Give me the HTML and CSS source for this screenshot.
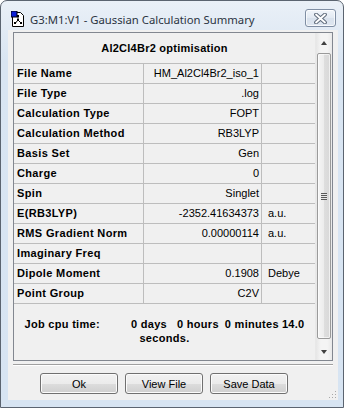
FILE: index.html
```html
<!DOCTYPE html>
<html lang="en">
<head>
    <meta charset="UTF-8">
    <title>G3:M1:V1 - Gaussian Calculation Summary</title>
    <link rel="stylesheet" href="styles.css">
</head>
<body>

<div class="window">
    <div class="titlebar">
        <svg class="app-icon" width="14" height="16" viewBox="0 0 14 16">
            <path d="M1.5 1.5 H9.5 L12.5 4.5 V15.5 H1.5 Z" fill="#fff" stroke="#000"/>
            <rect x="0" y="0" width="6" height="6" fill="#0b1fd6" stroke="#000" stroke-width="1"/>
            <path d="M7 5 V9 M7 9 L4.5 12 M7 9 L10 12" stroke="#000" stroke-width="1" fill="none"/>
            <rect x="6" y="4" width="2" height="2" fill="#000"/>
            <rect x="6" y="8" width="2" height="2" fill="#000"/>
            <rect x="3" y="11" width="2" height="2" fill="#000"/>
            <rect x="9" y="11" width="2" height="2" fill="#000"/>
        </svg>
        <span class="title">G3:M1:V1 - Gaussian Calculation Summary</span>
        <div class="close-btn">
            <svg width="15" height="11" viewBox="0 0 15 11">
                <path d="M3 1.5 L12 9.5 M12 1.5 L3 9.5" stroke="#5f6b7b" stroke-width="3.8" stroke-linecap="round"/>
                <path d="M3 1.5 L12 9.5 M12 1.5 L3 9.5" stroke="#fff" stroke-width="1.8" stroke-linecap="round"/>
            </svg>
        </div>
    </div>

    <div class="client">
        <div class="panel">
            <div class="summary">
                <div class="summary-title">Al2Cl4Br2 optimisation</div>
                <div class="summary-grid">
                    <div class="cell label">File Name</div><div class="cell value">HM_Al2Cl4Br2_iso_1</div><div class="cell unit"></div>
                    <div class="cell label">File Type</div><div class="cell value">.log</div><div class="cell unit"></div>
                    <div class="cell label">Calculation Type</div><div class="cell value">FOPT</div><div class="cell unit"></div>
                    <div class="cell label">Calculation Method</div><div class="cell value">RB3LYP</div><div class="cell unit"></div>
                    <div class="cell label">Basis Set</div><div class="cell value">Gen</div><div class="cell unit"></div>
                    <div class="cell label">Charge</div><div class="cell value">0</div><div class="cell unit"></div>
                    <div class="cell label">Spin</div><div class="cell value">Singlet</div><div class="cell unit"></div>
                    <div class="cell label">E(RB3LYP)</div><div class="cell value">-2352.41634373</div><div class="cell unit">a.u.</div>
                    <div class="cell label">RMS Gradient Norm</div><div class="cell value">0.00000114</div><div class="cell unit">a.u.</div>
                    <div class="cell label">Imaginary Freq</div><div class="cell value"></div><div class="cell unit"></div>
                    <div class="cell label">Dipole Moment</div><div class="cell value">0.1908</div><div class="cell unit">Debye</div>
                    <div class="cell label">Point Group</div><div class="cell value">C2V</div><div class="cell unit"></div>
                </div>
                <div class="cpu-time">
                    <div class="cpu-line"><span>Job cpu time:</span><span class="gap-lg">0 days</span><span class="gap-md">0 hours</span><span class="gap-sm">0 minutes</span><span class="gap-xs">14.0</span></div>
                    <div class="cpu-line">seconds.</div>
                </div>
            </div>
            <div class="scrollbar">
                <div class="scroll-btn"><span class="arrow-up"></span></div>
                <div class="scroll-thumb"><span class="thumb-grip"></span></div>
                <div class="scroll-btn"><span class="arrow-down"></span></div>
            </div>
        </div>

        <div class="separator"></div>

        <div class="button-row">
            <button type="button" class="btn">Ok</button>
            <button type="button" class="btn">View File</button>
            <button type="button" class="btn">Save Data</button>
        </div>

        <div class="size-grip"></div>
    </div>
</div>

</body>
</html>
```

FILE: styles.css
```css
body {
    margin: 0;
    background: #fff;
    font-family: "Liberation Sans", Arial, sans-serif;
    font-size: 11px;
    color: #000;
}

.window {
    width: 344px;
    height: 408px;
    box-sizing: border-box;
    border: 1px solid #5b6470;
    border-radius: 7px 7px 0 0;
    background: linear-gradient(#eaf0f7, #d9e5f2 60px, #d7e4f2);
    display: flex;
    flex-direction: column;
}

.titlebar {
    height: 29px;
    display: flex;
    align-items: center;
    padding: 0 7px 0 10px;
}

.app-icon {
    flex: none;
    margin-top: 6px;
}

.title {
    margin-left: 5px;
    margin-top: 7px;
    font-family: "Noto Sans", "Open Sans", sans-serif;
    font-size: 11.3px;
    color: #2b3442;
    flex: 1;
    white-space: nowrap;
}

.close-btn {
    align-self: flex-start;
    margin-top: 8px;
    width: 31px;
    height: 18px;
    box-sizing: border-box;
    border: 1px solid #7f8ea3;
    border-radius: 3px;
    background: linear-gradient(#f1f5fa, #e2e9f2 50%, #d8e1ec 51%, #dfe7f1);
    box-shadow: inset 0 0 0 1px rgba(255, 255, 255, 0.7);
    display: flex;
    align-items: center;
    justify-content: center;
}

.client {
    flex: 1;
    margin: 0 5px 7px 7px;
    background: #f0f0f0;
    display: flex;
    flex-direction: column;
    position: relative;
}

.panel {
    margin: 2px 5px 0 5px;
    height: 329px;
    box-sizing: border-box;
    border: 1px solid #828790;
    display: flex;
}

.summary {
    flex: 1;
    display: flex;
    flex-direction: column;
}

.summary-title {
    height: 30px;
    display: flex;
    align-items: center;
    justify-content: center;
    font-weight: bold;
    letter-spacing: 0.25px;
}

.summary-grid {
    display: grid;
    grid-template-columns: 130px 118px 1fr;
    border-bottom: 1px solid #bdbdbd;
}

.cell {
    height: 20px;
    box-sizing: border-box;
    border-top: 1px solid #bdbdbd;
    line-height: 19px;
    white-space: nowrap;
    overflow: hidden;
}

.label {
    padding-left: 3px;
    border-right: 1px solid #bdbdbd;
    font-weight: bold;
    letter-spacing: 0.35px;
}

.value {
    padding-right: 2px;
    border-right: 1px solid #bdbdbd;
    text-align: right;
}

.unit {
    padding-left: 6px;
}

.cpu-time {
    padding-top: 13px;
    font-weight: bold;
    letter-spacing: 0.3px;
    line-height: 14px;
}

.cpu-line {
    display: flex;
    justify-content: center;
    white-space: nowrap;
}

.gap-lg { margin-left: 31px; }
.gap-md { margin-left: 10px; }
.gap-sm { margin-left: 6px; }
.gap-xs { margin-left: 3px; }

.scrollbar {
    width: 17px;
    display: flex;
    flex-direction: column;
    background: linear-gradient(90deg, #e6e6e6, #f4f4f4 30%, #f4f4f4 70%, #e9e9e9);
    border-left: 1px solid #e8e8e8;
    box-sizing: border-box;
}

.scroll-btn {
    height: 17px;
    display: flex;
    align-items: center;
    justify-content: center;
    flex: none;
}

.arrow-up {
    width: 0;
    height: 0;
    border-left: 3.5px solid transparent;
    border-right: 3.5px solid transparent;
    border-bottom: 4px solid #404040;
    margin-top: 2px;
}

.arrow-down {
    width: 0;
    height: 0;
    border-left: 3.5px solid transparent;
    border-right: 3.5px solid transparent;
    border-top: 4px solid #404040;
}

.scroll-thumb {
    flex: 1;
    margin: 3px 0 4px 1px;
    width: 14px;
    box-sizing: border-box;
    border: 1px solid #9a9a9a;
    border-radius: 2px;
    background: linear-gradient(90deg, #f5f5f5, #ececec 50%, #dedede 51%, #d8d8d8);
    box-shadow: inset 0 0 0 1px rgba(255, 255, 255, 0.6);
    display: flex;
    align-items: center;
    justify-content: center;
}

.thumb-grip {
    width: 6px;
    height: 7px;
    background: repeating-linear-gradient(#5a5a5a 0 1px, #e8e8e8 1px 2px);
}

.separator {
    margin: 3px 5px 0 5px;
    height: 2px;
    box-sizing: border-box;
    border-top: 1px solid #a0a0a0;
    border-bottom: 1px solid #fff;
}

.button-row {
    display: flex;
    gap: 7px;
    margin-top: 7px;
    padding-left: 32px;
}

.btn {
    width: 78px;
    height: 21px;
    padding: 0;
    border: 1px solid #707070;
    border-radius: 3px;
    background: linear-gradient(#f2f2f2, #ebebeb 50%, #dddddd 51%, #cfcfcf);
    box-shadow: inset 0 0 0 1px #fbfbfb;
    font-family: "Liberation Sans", Arial, sans-serif;
    font-size: 11px;
    color: #000;
}

.size-grip {
    position: absolute;
    right: 2px;
    bottom: 2px;
    width: 8px;
    height: 8px;
    background:
        radial-gradient(circle, #a8a8a8 0.8px, transparent 1px) 0 0 / 3px 3px;
    clip-path: polygon(100% 0, 100% 100%, 0 100%);
}
```
